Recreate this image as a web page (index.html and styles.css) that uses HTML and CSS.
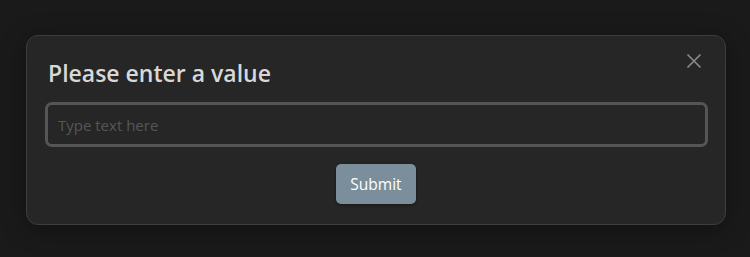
FILE: index.html
```html
<!DOCTYPE html>
<html>
<head>
<meta charset="utf-8">
<link rel="stylesheet" href="styles.css">
</head>
<body>
<div class="backdrop">
  <div class="modal">
    <button class="close" aria-label="Close">
      <svg width="16" height="16" viewBox="0 0 16 16"><path d="M1.5 1.5 L14.5 14.5 M14.5 1.5 L1.5 14.5" stroke="#8a8a8a" stroke-width="1.6" fill="none"/></svg>
    </button>
    <h1 class="title">Please enter a value</h1>
    <input class="field" type="text" placeholder="Type text here">
    <div class="actions">
      <button class="submit">Submit</button>
    </div>
  </div>
</div>
</body>
</html>
```

FILE: styles.css
```css
html, body {
  margin: 0;
  padding: 0;
  background: #1a1a1a;
  font-family: "Open Sans", "Noto Sans", sans-serif;
}
.backdrop {
  padding: 35px 24px 0 26px;
  height: 257px;
  box-sizing: border-box;
}
.modal {
  position: relative;
  box-sizing: border-box;
  width: 700px;
  height: 190px;
  background: #262626;
  border: 1px solid #3d3d3d;
  border-radius: 12px;
  box-shadow: 0 4px 24px rgba(0,0,0,0.35);
  padding: 21px 18px 0 18px;
  display: flex;
  flex-direction: column;
}
.close {
  position: absolute;
  top: 16px;
  right: 22px;
  width: 18px;
  height: 18px;
  padding: 0;
  border: 0;
  background: transparent;
  display: flex;
  align-items: center;
  justify-content: center;
}
.title {
  margin: 0 0 0 3px;
  font-size: 23px;
  font-weight: 600;
  line-height: 32px;
  color: #d8d8d8;
}
.field {
  margin-top: 13px;
  box-sizing: border-box;
  width: 663px;
  height: 45px;
  background: #262626;
  border: 3px solid #555555;
  border-radius: 7px;
  padding: 0 10px;
  font-family: inherit;
  font-size: 15px;
  color: #ddd;
  outline: none;
}
.field::placeholder {
  color: #565656;
}
.actions {
  display: flex;
  justify-content: center;
  margin-top: 17px;
}
.submit {
  width: 80px;
  height: 40px;
  background: #7a8f9b;
  border: 0;
  border-radius: 5px;
  color: #ffffff;
  font-family: inherit;
  font-size: 15.5px;
  box-shadow: 0 1px 3px rgba(0,0,0,0.4);
}
```
